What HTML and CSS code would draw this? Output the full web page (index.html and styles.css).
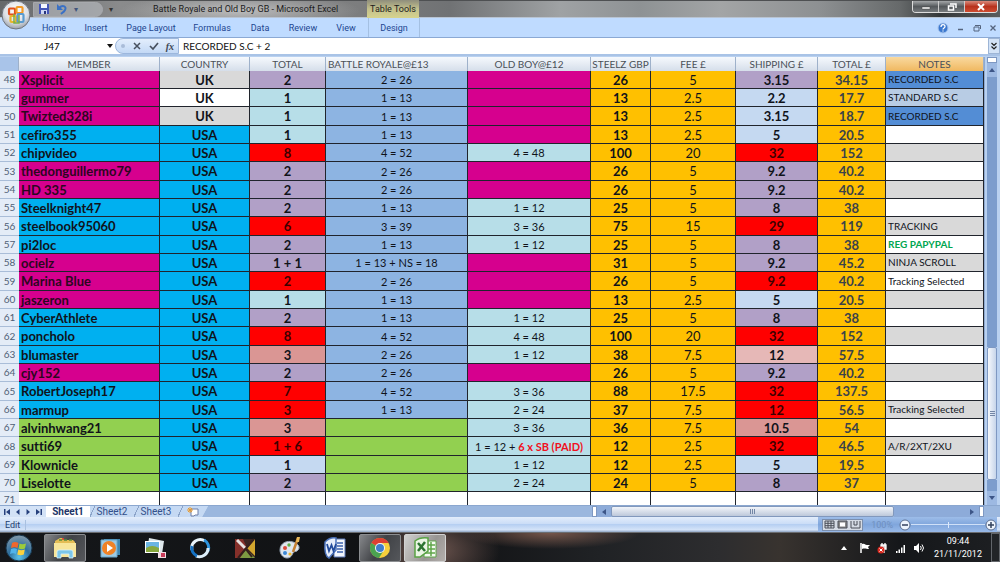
FILE: index.html
```html
<!DOCTYPE html>
<html lang="en">
<head>
<meta charset="utf-8">
<title>Battle Royale and Old Boy GB - Microsoft Excel</title>
<link rel="stylesheet" href="styles.css">
</head>
<body>
<header class="titlebar">
  <button class="orb" aria-label="Office Button">
    <svg viewBox="0 0 30 30" width="30" height="30">
      <defs><radialGradient id="orbg" cx=".5" cy=".35" r=".7"><stop offset="0" stop-color="#fff"/><stop offset=".6" stop-color="#dde0e6"/><stop offset="1" stop-color="#8c929c"/></radialGradient></defs>
      <circle cx="15" cy="15" r="14" fill="url(#orbg)" stroke="#70757e"/>
      <g fill="none" stroke-width="2.2"><rect x="8" y="8.500" width="6" height="6" rx="1" stroke="#e0501e"/><rect x="15.500" y="7" width="6" height="6" rx="1" stroke="#f39a28"/><rect x="9.500" y="16" width="5.500" height="6" rx="1" stroke="#e9b52c"/><rect x="16.500" y="14" width="6" height="8" rx="1" stroke="#5a9bd0"/><path d="M13 14v9h5v-8" stroke="#7eae45" stroke-width="1.500"/></g>
    </svg>
  </button>
  <div class="quick">
    <button aria-label="Save"><svg viewBox="0 0 12 12" width="12" height="12"><path d="M1 1h10v10H1z" fill="#4456b8"/><path d="M3 1h6v4H3z" fill="#f4f6ff"/><path d="M3 7h6v4H3z" fill="#cdd6f3"/><path d="M6 8h2v3H6z" fill="#26347e"/></svg></button>
    <button aria-label="Undo"><svg viewBox="0 0 12 12" width="12" height="12"><path d="M3 5c4-4 8-1 6 2-1 2-3 3-4 4" fill="none" stroke="#3a70c4" stroke-width="2"/><path d="M1 1v6h6z" fill="#3a70c4"/></svg></button>
    <span class="tiny">▾</span>
  </div>
  <span class="custom">▾</span>
  <h1 class="apptitle">Battle Royale and Old Boy GB - Microsoft Excel</h1>
  <span class="tabletools">Table Tools</span>
  <div class="winbtns">
    <button aria-label="Minimize"><svg viewBox="0 0 10 8" width="10" height="8"><path d="M1 4h8v2H1z" fill="#fff" stroke="#444" stroke-width=".5"/></svg></button>
    <button aria-label="Restore"><svg viewBox="0 0 10 8" width="10" height="8"><path d="M3 1h6v4M1.500 3h5v4h-5z" fill="none" stroke="#fff" stroke-width="1.500"/></svg></button>
    <button class="close" aria-label="Close"><svg viewBox="0 0 10 8" width="10" height="8"><path d="M2 1l6 6M8 1L2 7" stroke="#fff" stroke-width="2"/></svg></button>
  </div>
</header>
<nav class="ribbon">
  <button class="t-home">Home</button><button class="t-insert">Insert</button><button class="t-layout">Page Layout</button><button class="t-formulas">Formulas</button><button class="t-data">Data</button><button class="t-review">Review</button><button class="t-view">View</button><button class="t-design">Design</button>
  <div class="docbtns">
    <button aria-label="Help"><svg viewBox="0 0 12 12" width="12" height="12"><circle cx="6" cy="6" r="5" fill="#3b78cf" stroke="#a9c6ee"/><path d="M4 5c0-3 4-3 4-.500C8 6 6 6 6 7.500M6 8.500v1" fill="none" stroke="#fff" stroke-width="1.300"/></svg></button>
    <button aria-label="Minimize workbook"><svg viewBox="0 0 8 8" width="8" height="8"><path d="M1 5.500h5" stroke="#55647e" stroke-width="1.500"/></svg></button>
    <button aria-label="Restore workbook"><svg viewBox="0 0 8 8" width="8" height="8"><path d="M1 3h5v4H1zM2 1.500h5.500V5" fill="none" stroke="#55647e"/></svg></button>
    <button aria-label="Close workbook"><svg viewBox="0 0 8 8" width="8" height="8"><path d="M1.500 1.500l5 5M6.500 1.500l-5 5" stroke="#55647e" stroke-width="1.300"/></svg></button>
  </div>
</nav>
<div class="formulabar">
  <input class="namebox" aria-label="Name box" value="J47">
  <button class="namedrop" aria-label="Name list"><svg viewBox="0 0 6 4" width="6" height="4"><path d="M0 0h6L3 4z" fill="#111"/></svg></button>
  <div class="fx">
    <span class="dot"></span>
    <button aria-label="Cancel"><svg viewBox="0 0 10 10" width="10" height="10"><path d="M2 2l6 6M8 2L2 8" stroke="#47505e" stroke-width="1.500"/></svg></button>
    <button aria-label="Enter"><svg viewBox="0 0 10 10" width="10" height="10"><path d="M1 5l3 3 5-6" fill="none" stroke="#47505e" stroke-width="1.700"/></svg></button>
    <button class="fn" aria-label="Insert function">fx</button>
  </div>
  <input class="formula" aria-label="Formula" value="RECORDED S.C + 2">
  <button class="expand" aria-label="Expand formula bar"><svg viewBox="0 0 6 8" width="6" height="8"><path d="M.500 1L3 3.500 5.500 1M.500 4.500L3 7l2.500-2.500" fill="none" stroke="#222" stroke-width="1.200"/></svg></button>
</div>
<main class="work">
<div class="sheet">
<table>
<colgroup><col class="c-num"><col class="c-member"><col class="c-country"><col class="c-total"><col class="c-battle"><col class="c-old"><col class="c-gbp"><col class="c-fee"><col class="c-ship"><col class="c-sum"><col class="c-notes"></colgroup>
<thead><tr><th class="corner" aria-label="Select all"></th><th>MEMBER</th><th>COUNTRY</th><th>TOTAL</th><th class="left">BATTLE ROYALE@£13</th><th>OLD BOY@£12</th><th>STEELZ GBP</th><th>FEE £</th><th>SHIPPING £</th><th>TOTAL £</th><th class="active">NOTES</th></tr></thead>
<tbody>
<tr><th>48</th><td class="mag">Xsplicit</td><td class="grey">UK</td><td class="pur">2</td><td>2 = 26</td><td class="mag"></td><td>26</td><td>5</td><td class="pur">3.15</td><td>34.15</td><td class="rec">RECORDED S.C</td></tr>
<tr><th>49</th><td class="mag">gummer</td><td class="white">UK</td><td class="aqua">1</td><td>1 = 13</td><td class="mag"></td><td>13</td><td>2.5</td><td class="sky">2.2</td><td>17.7</td><td class="std">STANDARD S.C</td></tr>
<tr><th>50</th><td class="mag">Twizted328i</td><td class="grey">UK</td><td class="aqua">1</td><td>1 = 13</td><td class="mag"></td><td>13</td><td>2.5</td><td class="sky">3.15</td><td>18.7</td><td class="rec">RECORDED S.C</td></tr>
<tr><th>51</th><td>cefiro355</td><td>USA</td><td class="aqua">1</td><td>1 = 13</td><td class="mag"></td><td>13</td><td>2.5</td><td class="sky">5</td><td>20.5</td><td></td></tr>
<tr><th>52</th><td>chipvideo</td><td>USA</td><td class="red">8</td><td>4 = 52</td><td>4 = 48</td><td>100</td><td>20</td><td class="red">32</td><td>152</td><td class="grey"></td></tr>
<tr><th>53</th><td class="mag">thedonguillermo79</td><td>USA</td><td class="pur">2</td><td>2 = 26</td><td class="mag"></td><td>26</td><td>5</td><td class="pur">9.2</td><td>40.2</td><td></td></tr>
<tr><th>54</th><td class="mag">HD 335</td><td>USA</td><td class="pur">2</td><td>2 = 26</td><td class="mag"></td><td>26</td><td>5</td><td class="pur">9.2</td><td>40.2</td><td class="grey"></td></tr>
<tr><th>55</th><td>Steelknight47</td><td>USA</td><td class="pur">2</td><td>1 = 13</td><td>1 = 12</td><td>25</td><td>5</td><td class="pur">8</td><td>38</td><td></td></tr>
<tr><th>56</th><td>steelbook95060</td><td>USA</td><td class="red">6</td><td>3 = 39</td><td>3 = 36</td><td>75</td><td>15</td><td class="red">29</td><td>119</td><td class="grey">TRACKING</td></tr>
<tr><th>57</th><td>pi2loc</td><td>USA</td><td class="pur">2</td><td>1 = 13</td><td>1 = 12</td><td>25</td><td>5</td><td class="pur">8</td><td>38</td><td class="paypal">REG PAPYPAL</td></tr>
<tr><th>58</th><td class="mag">ocielz</td><td>USA</td><td class="pur">1 + 1</td><td>1 = 13 + NS = 18</td><td class="mag"></td><td>31</td><td>5</td><td class="pur">9.2</td><td>45.2</td><td class="grey">NINJA SCROLL</td></tr>
<tr><th>59</th><td class="mag">Marina Blue</td><td>USA</td><td class="red">2</td><td>2 = 26</td><td class="mag"></td><td>26</td><td>5</td><td class="red">9.2</td><td>40.2</td><td>Tracking Selected</td></tr>
<tr><th>60</th><td class="mag">jaszeron</td><td>USA</td><td class="aqua">1</td><td>1 = 13</td><td class="mag"></td><td>13</td><td>2.5</td><td class="sky">5</td><td>20.5</td><td class="grey"></td></tr>
<tr><th>61</th><td>CyberAthlete</td><td>USA</td><td class="pur">2</td><td>1 = 13</td><td>1 = 12</td><td>25</td><td>5</td><td class="pur">8</td><td>38</td><td></td></tr>
<tr><th>62</th><td>poncholo</td><td>USA</td><td class="red">8</td><td>4 = 52</td><td>4 = 48</td><td>100</td><td>20</td><td class="red">32</td><td>152</td><td class="grey"></td></tr>
<tr><th>63</th><td>blumaster</td><td>USA</td><td class="rose">3</td><td>2 = 26</td><td>1 = 12</td><td>38</td><td>7.5</td><td class="pink">12</td><td>57.5</td><td></td></tr>
<tr><th>64</th><td class="mag">cjy152</td><td>USA</td><td class="pur">2</td><td>2 = 26</td><td class="mag"></td><td>26</td><td>5</td><td class="pur">9.2</td><td>40.2</td><td class="grey"></td></tr>
<tr><th>65</th><td>RobertJoseph17</td><td>USA</td><td class="red">7</td><td>4 = 52</td><td>3 = 36</td><td>88</td><td>17.5</td><td class="red">32</td><td>137.5</td><td></td></tr>
<tr><th>66</th><td>marmup</td><td>USA</td><td class="red">3</td><td>1 = 13</td><td>2 = 24</td><td>37</td><td>7.5</td><td class="red">12</td><td>56.5</td><td class="grey">Tracking Selected</td></tr>
<tr><th>67</th><td class="green">alvinhwang21</td><td>USA</td><td class="rose">3</td><td class="green"></td><td>3 = 36</td><td>36</td><td>7.5</td><td class="rose">10.5</td><td>54</td><td></td></tr>
<tr><th>68</th><td class="green">sutti69</td><td>USA</td><td class="red">1 + 6</td><td class="green"></td><td>1 = 12 + <b class="paid">6 x SB (PAID)</b></td><td>12</td><td>2.5</td><td class="red">32</td><td>46.5</td><td class="grey">A/R/2XT/2XU</td></tr>
<tr><th>69</th><td class="green">Klownicle</td><td>USA</td><td class="sky">1</td><td class="green"></td><td>1 = 12</td><td>12</td><td>2.5</td><td class="sky">5</td><td>19.5</td><td></td></tr>
<tr><th>70</th><td class="green">Liselotte</td><td>USA</td><td class="pur">2</td><td class="green"></td><td>2 = 24</td><td>24</td><td>5</td><td class="pur">8</td><td>37</td><td class="grey"></td></tr>
<tr class="blank"><th>71</th><td></td><td></td><td></td><td></td><td></td><td></td><td></td><td></td><td></td><td></td></tr>
</tbody>
</table>
</div>
<div class="vscroll">
  <span class="split"></span>
  <span class="arrow"><svg viewBox="0 0 6 4" width="6" height="4"><path d="M0 4h6L3 0z" fill="#3c5587"/></svg></span>
  <span class="above"></span><span class="thumb"><i></i><i></i><i></i></span><span class="below"></span>
  <span class="arrow"><svg viewBox="0 0 6 4" width="6" height="4"><path d="M0 0h6L3 4z" fill="#3c5587"/></svg></span>
</div>
</main>
<div class="tabsbar">
  <div class="sheettabs">
    <div class="tabnav">
      <button aria-label="First sheet"><svg viewBox="0 0 8 8" width="8" height="8"><path d="M1 1v6h1.500V1zM7 1v6L3 4z" fill="#26407c"/></svg></button>
      <button aria-label="Previous sheet"><svg viewBox="0 0 8 8" width="8" height="8"><path d="M5.500 1v6L2 4z" fill="#26407c"/></svg></button>
      <button aria-label="Next sheet"><svg viewBox="0 0 8 8" width="8" height="8"><path d="M2.500 1v6L6 4z" fill="#26407c"/></svg></button>
      <button aria-label="Last sheet"><svg viewBox="0 0 8 8" width="8" height="8"><path d="M5.500 1v6H7V1zM1 1v6l4-3z" fill="#26407c"/></svg></button>
    </div>
    <button class="tab current">Sheet1</button><button class="tab">Sheet2</button><button class="tab">Sheet3</button>
    <button class="tab new" aria-label="Insert worksheet"><svg viewBox="0 0 12 10" width="12" height="10"><path d="M4 2h7v6H8l-1 1H4z" fill="#fff" stroke="#6d7fa8"/><path d="M3 0v6M0 3h6M1 1l4 4M5 1L1 5" stroke="#e99a2c"/></svg></button>
  </div>
  <div class="hscroll">
    <span class="grip"></span>
    <span class="harrow"><svg viewBox="0 0 4 6" width="4" height="6"><path d="M4 0v6L0 3z" fill="#3c5587"/></svg></span>
    <span class="hthumb"><i></i><i></i><i></i></span><span class="hrest"></span>
    <span class="harrow"><svg viewBox="0 0 4 6" width="4" height="6"><path d="M0 0v6l4-3z" fill="#3c5587"/></svg></span>
    <span class="grip"></span>
  </div>
</div>
<div class="status">
  <span class="mode">Edit</span>
  <div class="zoomarea">
    <div class="views">
      <button aria-label="Normal"><svg viewBox="0 0 11 9" width="11" height="9"><path d="M1 1h9v7H1zM1 3.300h9M1 5.700h9M4 1v7M7 1v7" fill="none" stroke="#4a4f58"/></svg></button>
      <button aria-label="Page layout"><svg viewBox="0 0 11 9" width="11" height="9"><path d="M1 1h9v7H1z" fill="#888" stroke="#4a4f58"/><path d="M3 2.500h5v4H3z" fill="#fff"/></svg></button>
      <button aria-label="Page break preview"><svg viewBox="0 0 11 9" width="11" height="9"><path d="M1 1v7h9V1M4 1v4M7 1v4M4 5h3" fill="none" stroke="#4a4f58"/></svg></button>
    </div>
    <span class="pct">100%</span>
    <button aria-label="Zoom out"><svg viewBox="0 0 12 12" width="12" height="12"><circle cx="6" cy="6" r="5" fill="#eef4fd" stroke="#5d6f90"/><path d="M3 6h6" stroke="#33415c" stroke-width="1.500"/></svg></button>
    <input class="slider" type="range" aria-label="Zoom" disabled>
    <button aria-label="Zoom in"><svg viewBox="0 0 12 12" width="12" height="12"><circle cx="6" cy="6" r="5" fill="#eef4fd" stroke="#5d6f90"/><path d="M3 6h6M6 3v6" stroke="#33415c" stroke-width="1.500"/></svg></button>
  </div>
</div>
<footer class="taskbar">
  <button class="start" aria-label="Start"><svg viewBox="0 0 28 28" width="28" height="28">
    <defs><radialGradient id="st" cx=".5" cy=".85" r=".8"><stop offset="0" stop-color="#5cc4ea"/><stop offset=".5" stop-color="#2c6f9f"/><stop offset="1" stop-color="#7d96a8"/></radialGradient></defs>
    <circle cx="14" cy="14" r="13" fill="url(#st)" stroke="#17344a"/>
    <path d="M7 9c2-1.500 4-1.500 6.500 0L12.500 14c-2-1-4-1-6.500 0z" fill="#f0672d"/><path d="M14.500 9.500c2 1 4 1 6.500 0L20 14.500c-2 1-4 1-6.500 0z" fill="#9ccb3b"/><path d="M6 15c2-1 4-1 6 0l-1 5c-2-1-4-1-6 0z" fill="#51b4ea"/><path d="M13.300 15.500c2 1 4 1 6.500 0l-1 5c-2 1-4.500 1-6.500 0z" fill="#fbd13c"/></svg></button>
  <div class="group">
    <button class="on" aria-label="Windows Explorer"><svg viewBox="0 0 26 24" width="26" height="24"><path d="M3 5l5-3h3l1 2h9l2 2v15H3z" fill="#e4bd55"/><path d="M2 7h22v14H2z" fill="#f8e59a"/><path d="M7 4h3M12 4h3M17 4h3" stroke="#5c8f3c" stroke-width="1.500"/><path d="M10 3h2" stroke="#d33" stroke-width="1.500"/><path d="M5 22v-6q0-2 2-2h12q2 0 2 2v6h-4v-4H9v4z" fill="#7cc6ea" stroke="#d7f1fb" stroke-width=".800"/></svg></button>
    <button aria-label="Media Player"><svg viewBox="0 0 24 24" width="24" height="24"><path d="M6 3h16v16H6z" fill="#3f86b0"/><path d="M3 4h16v17H3z" fill="#9dcae4" stroke="#6aa6c9"/><circle cx="11" cy="12" r="7" fill="#f08226"/><path d="M9 8v8l6-4z" fill="#fff"/></svg></button>
    <button aria-label="Photo Gallery"><svg viewBox="0 0 24 24" width="24" height="24"><path d="M6 2l15 3-2 13-15-3z" fill="#dfe8ec"/><path d="M2 5h15v12H2z" fill="#fff"/><path d="M3 6h13v6H3z" fill="#6bb4e2"/><path d="M3 12q6-4 13 0v4H3z" fill="#88a83d"/><path d="M15 16h8v6h-8z" fill="#f0dce2"/><path d="M18 17h4v4h-4z" fill="#c93b59"/></svg></button>
    <button aria-label="Sync"><svg viewBox="0 0 24 24" width="24" height="24"><g fill="none" stroke-width="3"><path d="M4 14A8.500 8.500 0 0 1 17 5" stroke="#e9f5fc"/><path d="M16 4a8.500 8.500 0 0 1 4 11" stroke="#2e95df"/><path d="M20 12A8.500 8.500 0 0 1 8 20" stroke="#dceefa"/><path d="M9 20a8.500 8.500 0 0 1-5-10" stroke="#1572c4"/></g></svg></button>
    <button aria-label="Game"><svg viewBox="0 0 24 24" width="24" height="24"><path d="M2 3h20v19H2z" fill="#3b2420"/><path d="M2 3h8l4 9-6 10H2z" fill="#85302a"/><path d="M14 12l8-9v17z" fill="#d3a62e"/><path d="M13 13l9 9H7z" fill="#7d9a42"/><path d="M4 4l8 8" stroke="#e7e2df" stroke-width="3"/><path d="M12 12l7 9M21 3L5 22" stroke="#35201c" stroke-width="2"/></svg></button>
    <button aria-label="Paint"><svg viewBox="0 0 24 24" width="24" height="24"><path d="M2 14C2 7 9 4 15 6s8 6 4 9c-2 1-3 0-4 2s-2 5-6 5-7-4-7-8z" fill="#dfe6ee" stroke="#9aa9bb"/><circle cx="7" cy="12" r="2" fill="#d64b3b"/><circle cx="11" cy="9" r="1.700" fill="#5cb04a"/><circle cx="7" cy="17" r="2" fill="#3c88d6"/><circle cx="12" cy="18" r="1.600" fill="#edb62c"/><path d="M20 2l-5 14" stroke="#c48034" stroke-width="2.500"/><path d="M19 1h3l-1 5h-3z" fill="#e8b95c"/></svg></button>
    <button aria-label="Word"><svg viewBox="0 0 24 24" width="24" height="24"><path d="M11 3h11v18H11z" fill="#f3f6fb" stroke="#5a78b8"/><path d="M14 7h6M14 10h6M14 13h6M14 16h6" stroke="#3b62ae" stroke-width="1.500"/><path d="M2 6Q7 1 13 2v12l-7 8q-5-2-4-16z" fill="#e7eefa" stroke="#4a70b8" stroke-width="1.500"/><path d="M4 8l2 7 2.500-6 2 6L13 8" fill="none" stroke="#234c9c" stroke-width="1.800"/></svg></button>
  </div>
  <div class="group">
    <button class="on" aria-label="Chrome"><svg viewBox="0 0 24 24" width="24" height="24"><circle cx="12" cy="12" r="10" fill="#f6cf3b"/><path d="M12 12L3.300 7A10 10 0 0 1 20.700 7H12z" fill="#dc4033"/><path d="M3.300 7A10 10 0 0 0 11 22l5-8-4-2z" fill="#4ba350"/><circle cx="12" cy="12" r="5" fill="#f3f6f8"/><circle cx="12" cy="12" r="4" fill="#3f7dcc"/></svg></button>
    <button class="on focus" aria-label="Excel"><svg viewBox="0 0 24 24" width="24" height="24"><path d="M11 5h12v16H11z" fill="#f4faf2" stroke="#5fa64a"/><path d="M12 9h10M12 13h10M12 17h10M18 6v14" stroke="#5fa64a" stroke-width="1.500"/><path d="M2 5Q7 1 15 2v13l-8 6H2z" fill="#eaf5e4" stroke="#59a344" stroke-width="1.500"/><path d="M5 7l7 8M12 6l-7 9" stroke="#2c7430" stroke-width="2.500"/></svg></button>
  </div>
  <div class="tray">
    <svg viewBox="0 0 6 4" width="6" height="4"><path d="M0 4h6L3 0z" fill="#fff"/></svg>
    <svg viewBox="0 0 12 12" width="12" height="12"><path d="M2 1v10" stroke="#fff" stroke-width="1.500"/><path d="M3 2c3-1 3 1 5 1h3L9 5l1 2c-3 0-4-1-7 0z" fill="#fff"/></svg>
    <svg viewBox="0 0 12 12" width="12" height="12"><path d="M4 3h5v4H4zM5 1v2M8 1v2M7 7v4" fill="#ddd" stroke="#fff" stroke-width="1.300"/><circle cx="4" cy="8" r="3.500" fill="#d82a20"/><path d="M2.500 6.500l3 3M5.500 6.500l-3 3" stroke="#fff"/></svg>
    <svg viewBox="0 0 12 12" width="12" height="12"><path d="M1 9h1.500v2H1zM3.500 7.500H5V11H3.500zM6 5.500h1.500V11H6zM8.500 3H10v8H8.500z" fill="#fff"/></svg>
    <svg viewBox="0 0 12 12" width="12" height="12"><path d="M1 4h2l3-3v10L3 8H1z" fill="#fff"/><path d="M7.500 4q1.500 2 0 4M9 2.500q3 3.500 0 7" fill="none" stroke="#fff"/></svg>
  </div>
  <time class="clock"><span>09:44</span><span>21/11/2012</span></time>
  <button class="showdesk" aria-label="Show desktop"></button>
</footer>
</body>
</html>
```
FILE: styles.css
```css
* { box-sizing: border-box; }
body {
  margin: 0;
  height: 100vh;
  display: flex;
  flex-direction: column;
  overflow: hidden;
  font-family: Roboto, "Noto Sans", sans-serif;
  font-size: 9px;
  color: #1c1c1c;
  background: #c3d9f5;
}
button {
  margin: 0;
  padding: 0;
  border: 0;
  background: none;
  font: inherit;
  color: inherit;
  display: flex;
  align-items: center;
  justify-content: center;
}
input { margin: 0; padding: 0; border: 0; border-radius: 0; min-width: 0; outline: 0; }
svg { display: block; }

/* Title bar */
.titlebar {
  position: relative;
  flex: none;
  height: 18px;
  display: flex;
  align-items: center;
  padding-left: 33px;
  background:
    radial-gradient(ellipse 120px 18px at 24% 60%, rgba(225, 225, 225, .6), transparent),
    linear-gradient(90deg, #66686a 0, #8a8b8c 12%, #7c7d7e 36%, #707274 45%, #9fa2a4 56%, #8e9294 64%, #a3a5a6 72%, #8d9092 82%, #66696a 90%, #34383a 94%, #595c5e 100%);
  border-top: 1px solid #4e5052;
  border-bottom: 1px solid #b9c4d2;
}
.orb { position: absolute; left: 1px; top: -1px; z-index: 2; }
.quick {
  width: 70px;
  height: 15px;
  display: flex;
  align-items: center;
  gap: 6px;
  padding-left: 4px;
  border: 1px solid #a7a9ad;
  border-radius: 0 8px 8px 0;
  background: rgba(185, 188, 194, .6);
}
.tiny, .custom { width: 6px; font-size: 8px; color: #41557c; }
.custom { margin-left: 6px; color: #333; }
.apptitle { width: 182px; margin: 0 0 0 38px; font-size: 9px; font-weight: 400; line-height: 18px; white-space: nowrap; }
.tabletools {
  margin-left: 32px;
  width: 52px;
  line-height: 18px;
  text-align: center;
  white-space: nowrap;
  background: linear-gradient(#8f8e7c, #c3c08c 50%, #d6d38e);
}
.winbtns { margin: 0 2px 4px auto; display: flex; height: 12px; border: 1px solid #ddd; border-top: 0; border-radius: 0 0 4px 4px; overflow: hidden; }
.winbtns button { width: 26px; background: linear-gradient(#a4a7a9, #55595c 50%, #777b7e); border-right: 1px solid #ccc; }
.winbtns .close { width: 32px; border: 0; background: linear-gradient(#d98a7b, #b8321d 50%, #cf4c31); }

/* Ribbon tabs */
.ribbon {
  flex: none;
  height: 20px;
  display: flex;
  align-items: stretch;
  padding-left: 36px;
  color: #1d4690;
  background: #bfdbff;
  border-bottom: 1px solid #8ba9d4;
}
.t-home { width: 36px; }
.t-insert { width: 48px; }
.t-layout { width: 62px; }
.t-formulas { width: 60px; }
.t-data { width: 36px; }
.t-review { width: 50px; }
.t-view { width: 36px; }
.t-design { margin-left: 4px; width: 52px; border-left: 1px solid #a4c0e2; border-right: 1px solid #a4c0e2; }
.docbtns { margin-left: auto; padding-right: 3px; display: flex; gap: 8px; }

/* Formula bar */
.formulabar { flex: none; height: 18px; display: flex; background: #fff; border-bottom: 2px solid #a9c3e6; }
.namebox { width: 104px; text-align: center; font: 10px Lato, sans-serif; }
.namedrop { width: 11px; }
.fx {
  width: 64px;
  display: flex;
  align-items: center;
  justify-content: space-between;
  padding: 0 4px 0 5px;
  border-radius: 8px 0 0 8px;
  border: 1px solid #9cb7dd;
  background: linear-gradient(#e3eefc, #c3d9f5);
}
.dot { width: 4px; height: 4px; border-radius: 50%; background: #a9bcd8; }
.fn { font: italic bold 10px "Liberation Serif", serif; color: #3d4654; }
.formula { flex: 1; padding-left: 4px; font: 10px Lato, sans-serif; color: #111; }
.expand { width: 12px; background: #d3e3f7; border: 1px solid #9db5d6; }

/* Worksheet */
.work { flex: 1; min-height: 0; display: flex; padding-top: 1px; background: #b9d1f0; }
.sheet { flex: 1; min-width: 0; overflow: hidden; background: #fff; }
table {
  width: 100%;
  table-layout: fixed;
  border-collapse: separate;
  border-spacing: 0;
  font-family: Lato, sans-serif;
  font-variant-ligatures: none;
}
.c-num { width: 19px; }
.c-member { width: 141px; }
.c-country { width: 90px; }
.c-total { width: 76px; }
.c-battle { width: 142px; }
.c-old { width: 123px; }
.c-gbp { width: 60px; }
.c-fee { width: 85px; }
.c-ship { width: 82px; }
.c-sum { width: 68px; }
.c-notes { width: 98px; }
th, td { padding: 0; overflow: hidden; white-space: nowrap; text-align: center; line-height: 16px; }
thead th {
  height: 14px;
  font-size: 10px;
  font-weight: 400;
  line-height: 13px;
  color: #4a5058;
  background: linear-gradient(#f6f9fd, #d5deea);
  border-right: 1px solid #9eb1ca;
}
thead .left { text-align: left; padding-left: 2px; }
thead .active { background: linear-gradient(#f9d99f, #f0b860); }
thead .corner { background: #a9c4e9; }
tbody tr { height: 18px; }
tbody tr:nth-child(3n) { height: 19px; }
tbody th { font-size: 10px; font-weight: 400; line-height: 17px; color: #4f6075; background: #e4ecf7; border-bottom: 1px solid #a9bdd8; }
td { border-right: 1px solid #20242c; border-bottom: 1px solid #20242c; color: #10131a; }
td:nth-child(2) { text-align: left; padding-left: 2px; font-size: 13px; font-weight: 700; background: #00b0f0; }
td:nth-child(3) { font-size: 13px; font-weight: 700; background: #00b0f0; }
td:nth-child(4), td:nth-child(7), td:nth-child(9), td:nth-child(10) { font-size: 13px; font-weight: 700; }
td:nth-child(5) { font-size: 11px; line-height: 17px; background: #8db4e2; }
td:nth-child(6) { font-size: 11px; line-height: 17px; background: #b7dee8; }
td:nth-child(8) { font-size: 13px; }
td:nth-child(7), td:nth-child(8), td:nth-child(10) { background: #ffc000; }
td:nth-child(10) { color: #3a424a; }
td:nth-child(11) { text-align: left; padding-left: 2px; font-size: 10px; line-height: 17px; }
tr td.mag { background: #d6008e; color: #2c0620; }
tr td.green { background: #92d050; }
tr td.grey { background: #d9d9d9; }
tr td.white { background: #fff; }
tr td.pur { background: #b1a0c7; }
tr td.aqua { background: #b7dee8; }
tr td.sky { background: #c5d9f1; }
tr td.red { background: #f00; color: #3c0000; }
tr td.rose { background: #da9694; }
tr td.pink { background: #e6b8b7; }
tr td.rec { background: #538dd5; }
tr td.std { background: #b8cce4; }
tr td.paypal { color: #00a651; font-weight: 700; }
.paid { color: #f01020; }
tbody tr.blank { height: 14px; }
tr.blank th { line-height: 13px; border-bottom: 0; }
tr.blank td { line-height: 13px; background: #fff; border-bottom: 0; }

/* Scroll bars */
.vscroll { flex: none; width: 16px; display: flex; flex-direction: column; padding: 0 3px 0 2px; border-left: 1px solid #8ea9d0; }
.vscroll .split { height: 6px; background: #fff; border: 1px solid #7e98c2; }
.arrow { height: 14px; display: flex; align-items: center; justify-content: center; background: #9db9e2; }
.above { flex: 271; background: #7c9dcd; }
.thumb { flex: 132; display: flex; flex-direction: column; align-items: center; justify-content: center; gap: 1px; background: linear-gradient(90deg, #f5f8fc, #c6d5ea); border: 1px solid #7e98c2; border-radius: 2px; }
.thumb i { width: 5px; height: 1px; background: #7386a5; }
.below { flex: 11; background: #7c9dcd; }
.tabsbar { flex: none; height: 12px; display: flex; padding-right: 16px; background: #9bb7de; border-top: 1px solid #8ba7cf; }
.sheettabs { flex: 592; display: flex; }
.tabnav { width: 46px; display: flex; justify-content: space-around; padding: 0 2px; background: #d3e2f6; }
.tab {
  width: 44px;
  font-size: 10px;
  line-height: 11px;
  color: #33508a;
  background: linear-gradient(115deg, transparent 4px, #8ba3c8 4px, #8ba3c8 5px, #c5d9f3 5px) #c5d9f3;
}
.tab.current { font-size: 10px; color: #1d3568; font-weight: 700; background: #fff; }
.tab.new { width: 30px; clip-path: polygon(0 0, 100% 0, 80% 100%, 0 100%); }
.hscroll { flex: 392; display: flex; }
.grip { width: 5px; background: #fff; border: 1px solid #7e98c2; }
.harrow { width: 14px; display: flex; align-items: center; justify-content: center; background: #8dabd9; }
.hthumb { flex: 284; display: flex; align-items: center; justify-content: center; gap: 1px; background: linear-gradient(#f2f5fa, #bdc8da); border: 1px solid #8198bd; border-radius: 2px; }
.hthumb i { width: 1px; height: 5px; background: #7386a5; }
.hrest { flex: 72; background: #8dabd9; }

/* Status bar */
.status {
  flex: none;
  height: 15px;
  display: flex;
  align-items: center;
  justify-content: space-between;
  padding: 0 3px 0 5px;
  color: #24406e;
  background: linear-gradient(#e3edfb, #cbddf7 45%, #b6cff2 50%, #d4e3f8 85%, #90a6c5);
}
.mode { width: 21px; border-right: 1px solid #a9c0e0; }
.zoomarea { height: 100%; display: flex; align-items: center; padding-left: 4px; background: linear-gradient(#9dbde9, #80a6dc 50%, #98b9e8); }
.views { display: flex; height: 12px; background: #d5dbe4; border: 1px solid #7b8fae; }
.views button { width: 13px; }
.pct { margin: 0 6px 0 8px; color: #6f8fbf; }
.slider {
  appearance: none;
  width: 74px;
  height: 6px;
  background: linear-gradient(#dceafc, #dceafc) center / 1px 6px no-repeat, linear-gradient(#cfe0f8, #cfe0f8) center / 100% 1px no-repeat;
}
.slider::-webkit-slider-thumb { appearance: none; width: 0; height: 0; }

/* Taskbar */
.taskbar {
  flex: none;
  height: 30px;
  display: flex;
  align-items: center;
  padding-left: 5px;
  border-top: 1px solid #6a6c70;
  background:
    radial-gradient(ellipse 70px 40px at 43% 60%, rgba(126, 98, 90, .9), transparent),
    radial-gradient(ellipse 90px 16px at 55% 0, rgba(140, 100, 85, .8), transparent),
    linear-gradient(90deg, #15171a 0, #101113 44%, #202225 60%, #2d2d2f 72%, #38332f 78%, #15171a 90%, #1d1f22 100%);
}
.start { width: 28px; height: 28px; }
.group { display: flex; gap: 3px; margin-left: 3px; }
.start + .group { margin-left: 11px; }
.group button { width: 42px; height: 28px; border: 1px solid transparent; border-radius: 2px; }
.group .on { border-color: #8c8e91; background: linear-gradient(120deg, #85878a, #404246 50%, #55575b); }
.group .focus { border-color: #d1d1d1; background: linear-gradient(120deg, #d0d0cf, #989593 60%, #b3aeab); }
.tray { margin-left: auto; display: flex; align-items: center; gap: 6px; }
.tray svg:first-child { margin-right: 6px; }
.clock { width: 66px; display: flex; flex-direction: column; align-items: center; color: #fff; font-size: 9px; line-height: 13px; }
.showdesk { width: 9px; height: 100%; border: 1px solid #62656a; background: #222427; }
```
